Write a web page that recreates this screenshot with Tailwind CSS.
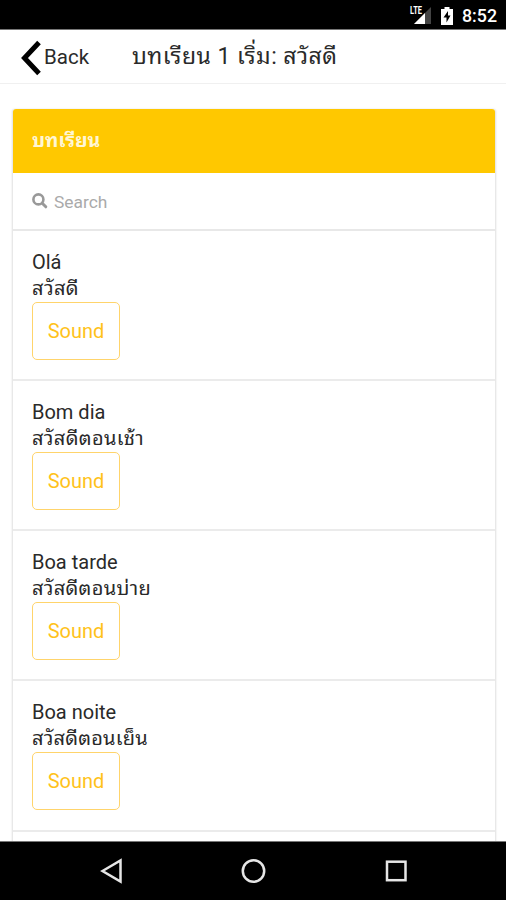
<!DOCTYPE html>
<html lang="th">
  <head>
    <meta charset="UTF-8" />
    <meta name="viewport" content="width=device-width, initial-scale=1.0" />
    <title>บทเรียน 1 เริ่ม: สวัสดี</title>
    <script src="https://cdn.jsdelivr.net/npm/@tailwindcss/browser@4"></script>
  </head>

  <body
    class="h-[900px] flex flex-col overflow-hidden bg-white text-[20px] text-[#2a2a2a] font-[Roboto,'Noto_Sans_Thai_Looped','Noto_Looped_Thai',Loma,Garuda,Waree,'Noto_Sans_Thai',sans-serif]"
  >
    <!-- Status bar -->
    <div
      class="h-[30px] shrink-0 flex items-center justify-end bg-black border-b border-[#777] pr-[9px] pt-[2px] text-white"
    >
      <svg class="w-[24px] h-[20px] mr-[8px]" viewBox="0 0 24 20">
        <path d="M5 18L22 1V18Z" fill="#444" />
        <path d="M5 18L16 7V18Z" fill="#fff" />
        <text
          x="1"
          y="8"
          fill="#fff"
          font-family="Roboto"
          font-size="10"
          font-weight="700"
          textLength="12"
          lengthAdjust="spacingAndGlyphs"
          stroke="#000"
          stroke-width="2"
          paint-order="stroke"
        >
          LTE
        </text>
      </svg>
      <svg class="w-[12px] h-[18px] mr-[9px]" viewBox="0 0 12 18">
        <path d="M3.500 0h5v2H12v16H0V2h3.500z" fill="#fff" />
        <path d="M7 4L2.500 10.500h3V15.500L9.500 8.500H7z" fill="#000" />
      </svg>
      <span class="text-[17.800px] font-medium leading-none">8:52</span>
    </div>

    <!-- Header -->
    <header
      class="h-[54px] shrink-0 flex items-center border-b border-[#f0f0f0] pl-[21px]"
    >
      <a href="#" class="w-[111px] flex items-center">
        <svg class="w-[21px] h-[36px] mt-[3px] mr-[2px]" viewBox="0 0 21 36">
          <path
            d="M18 2.500L3.500 18L18 33.500"
            fill="none"
            stroke="#000"
            stroke-width="5"
          />
        </svg>
        <span class="text-[20.500px] pt-px">Back</span>
      </a>
      <h1 class="text-[23px] leading-[30px] whitespace-nowrap tracking-[0.450px]">
        บทเรียน 1 เริ่ม: สวัสดี
      </h1>
    </header>

    <!-- Lessons -->
    <main class="grow min-h-0 overflow-hidden pt-[25px] pl-[12px] pr-[10px]">
      <div class="h-[760px] rounded-[3px] border-x border-[#e8e8e8] shadow-[0_0_2px_#ddd]">
        <div
          class="h-[64px] flex items-center rounded-t-[3px] bg-[#ffc800] pl-[19px] text-[19.500px] font-bold text-[#fff6d5]"
        >
          บทเรียน
        </div>
        <label class="h-[58px] flex items-center border-b-2 border-[#e8e8e8] pl-[19px]">
          <svg class="w-[16px] h-[16px] mr-[6px]" viewBox="0 0 16 16">
            <circle
              cx="6.400"
              cy="6.400"
              r="5"
              fill="none"
              stroke="#999"
              stroke-width="2.600"
            />
            <path
              d="M10.200 10.200L13.800 13.800"
              stroke="#999"
              stroke-width="3"
              stroke-linecap="round"
            />
          </svg>
          <span class="text-[17.400px] text-[#aaa] pt-[3px]">Search</span>
        </label>

        <ul class="leading-[26px]">
          <li class="h-[150px] border-b-2 border-[#ebebeb] pl-[19px] pt-[18px]">
            <p class="h-[26px]">Olá</p>
            <p class="h-[27px] tracking-[0.400px]">สวัสดี</p>
            <button
              class="w-[88px] h-[58px] rounded-[5px] border-[1.500px] border-[#ffd46b] text-[#ffc21a]"
            >
              Sound
            </button>
          </li>
          <li class="h-[150px] border-b-2 border-[#ebebeb] pl-[19px] pt-[18px]">
            <p class="h-[26px]">Bom dia</p>
            <p class="h-[27px] tracking-[0.350px]">สวัสดีตอนเช้า</p>
            <button
              class="w-[88px] h-[58px] rounded-[5px] border-[1.500px] border-[#ffd46b] text-[#ffc21a]"
            >
              Sound
            </button>
          </li>
          <li class="h-[150px] border-b-2 border-[#ebebeb] pl-[19px] pt-[18px]">
            <p class="h-[26px]">Boa tarde</p>
            <p class="h-[27px] tracking-[0.300px]">สวัสดีตอนบ่าย</p>
            <button
              class="w-[88px] h-[58px] rounded-[5px] border-[1.500px] border-[#ffd46b] text-[#ffc21a]"
            >
              Sound
            </button>
          </li>
          <li class="h-[151px] border-b-2 border-[#ebebeb] pl-[19px] pt-[18px]">
            <p class="h-[26px]">Boa noite</p>
            <p class="h-[27px] tracking-[0.200px]">สวัสดีตอนเย็น</p>
            <button
              class="w-[88px] h-[58px] rounded-[5px] border-[1.500px] border-[#ffd46b] text-[#ffc21a]"
            >
              Sound
            </button>
          </li>
        </ul>
      </div>
    </main>

    <!-- Navigation bar -->
    <nav class="h-[59px] shrink-0 bg-black border-t border-[#777]">
      <svg class="w-[506px] h-[58px]" viewBox="0 842 506 58">
        <g fill="none" stroke="#e6e6e6" stroke-width="2.500">
          <path d="M102.500 871L120.500 860.500V881.500Z" />
          <circle cx="253.500" cy="871" r="10.700" />
          <rect x="387" y="861.700" width="18.500" height="18.500" />
        </g>
      </svg>
    </nav>
  </body>
</html>
